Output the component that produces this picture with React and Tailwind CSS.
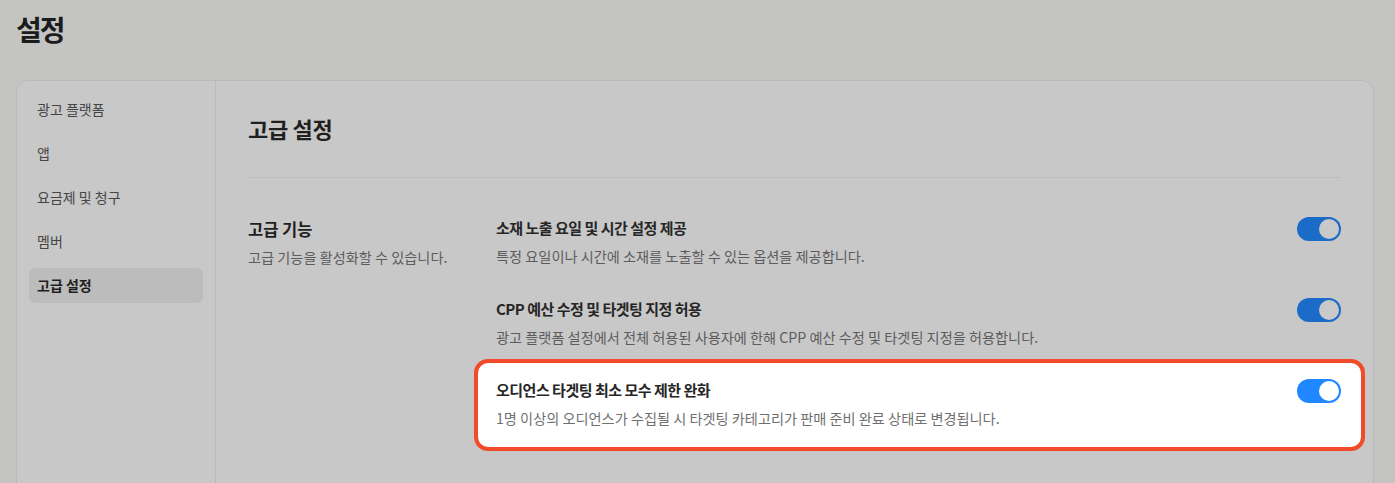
import React, { useState } from "react";

const menu = ["광고 플랫폼", "앱", "요금제 및 청구", "멤버", "고급 설정"];

const features = [
  {
    id: "schedule",
    title: "소재 노출 요일 및 시간 설정 제공",
    description: "특정 요일이나 시간에 소재를 노출할 수 있는 옵션을 제공합니다.",
  },
  {
    id: "cpp",
    title: "CPP 예산 수정 및 타겟팅 지정 허용",
    description:
      "광고 플랫폼 설정에서 전체 허용된 사용자에 한해 CPP 예산 수정 및 타겟팅 지정을 허용합니다.",
  },
  {
    id: "audience",
    title: "오디언스 타겟팅 최소 모수 제한 완화",
    description:
      "1명 이상의 오디언스가 수집될 시 타겟팅 카테고리가 판매 준비 완료 상태로 변경됩니다.",
    highlighted: true,
  },
];

function Toggle({ on, onClick, bright }) {
  return (
    <button
      type="button"
      onClick={onClick}
      className={`flex h-[24px] w-[44px] shrink-0 items-center rounded-full p-[2px] ${
        on ? "justify-end" : "justify-start"
      } ${on ? (bright ? "bg-[#1f87ff]" : "bg-[#1b6bc8]") : "bg-[#a9a9a9]"}`}
    >
      <span
        className={`h-[20px] w-[20px] rounded-full ${bright ? "bg-white" : "bg-[#c9c9c9]"}`}
      />
    </button>
  );
}

export default function App() {
  const [enabled, setEnabled] = useState({ schedule: true, cpp: true, audience: true });

  return (
    <div className="flex h-screen flex-col overflow-hidden bg-[#c4c5c3] pl-4 pr-[21px] font-['Noto_Sans_CJK_KR','Noto_Sans',sans-serif]">
      <h1 className="mb-[33px] pt-[11px] text-[28px] font-bold leading-[36px] tracking-[-2px] text-[#1c1c1c]">
        설정
      </h1>

      {/* Card */}
      <div className="flex min-h-[440px] rounded-t-[12px] border border-[#b9bab8] bg-[#c8c8c8]">
        {/* Sidebar */}
        <div className="flex w-[199px] shrink-0 flex-col gap-[9px] border-r border-[#b9bab8] px-3 pt-[11px]">
          {menu.map((item) => {
            const active = item === "고급 설정";
            return (
              <div
                key={item}
                className={`flex h-[35px] items-center rounded-[6px] px-2 text-[14px] ${
                  active ? "bg-[#bcbcbc] font-semibold text-[#1f1f1f]" : "text-[#454545]"
                }`}
              >
                {item}
              </div>
            );
          })}
        </div>

        {/* Main */}
        <div className="flex-1 px-8 pt-8">
          <h2 className="text-[22px] font-semibold leading-[30px] tracking-[-0.3px] text-[#1f1f1f]">
            고급 설정
          </h2>
          <div className="mt-[34px] border-t border-[#bdbdbd]" />

          <div className="flex pt-[39px]">
            <div className="w-[248px] shrink-0 pt-px">
              <h3 className="text-[16.5px] font-semibold leading-[22px] text-[#1f1f1f]">
                고급 기능
              </h3>
              <p className="mt-[7px] text-[14.2px] leading-[20px] text-[#5c5c5c]">
                고급 기능을 활성화할 수 있습니다.
              </p>
            </div>

            <div className="flex flex-1 flex-col gap-[32px]">
              {features.map((f) => (
                <div
                  key={f.id}
                  className={
                    f.highlighted
                      ? "-ml-[22px] -mr-[24px] -mt-[20px] flex items-start justify-between rounded-[14px] border-4 border-[#f24b29] bg-white pb-[19px] pl-[18px] pr-[20px] pt-4"
                      : "flex items-start justify-between"
                  }
                >
                  <div>
                    <div className="text-[15px] font-semibold leading-[22px] tracking-[-0.5px] text-[#262626]">
                      {f.title}
                    </div>
                    <div
                      className={`mt-[7px] text-[14.2px] leading-[20px] ${
                        f.highlighted ? "text-[#707070]" : "text-[#5c5c5c]"
                      }`}
                    >
                      {f.description}
                    </div>
                  </div>
                  <Toggle
                    on={enabled[f.id]}
                    bright={f.highlighted}
                    onClick={() => setEnabled((p) => ({ ...p, [f.id]: !p[f.id] }))}
                  />
                </div>
              ))}
            </div>
          </div>
        </div>
      </div>
    </div>
  );
}
